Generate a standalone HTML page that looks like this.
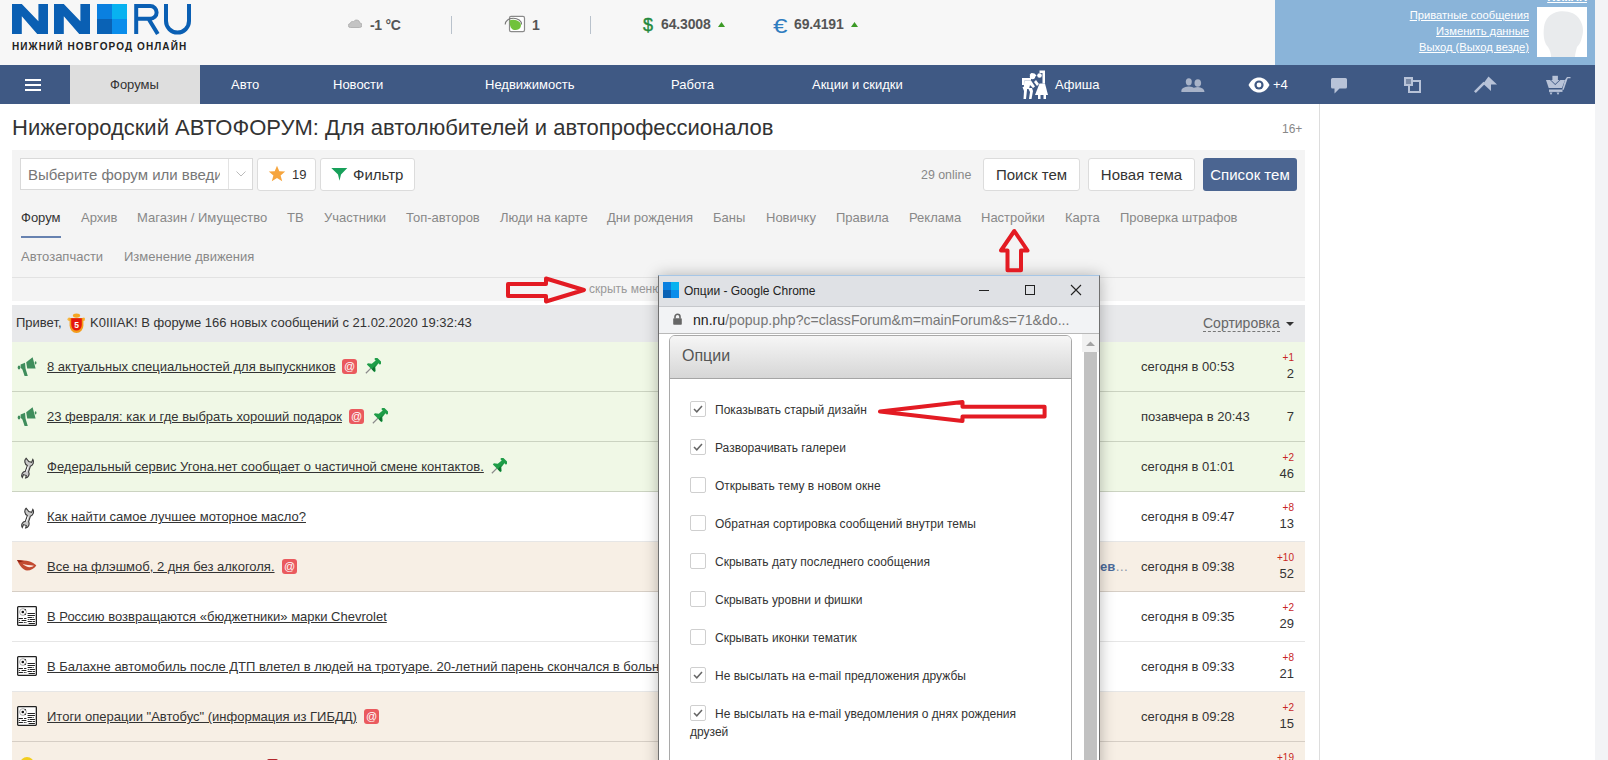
<!DOCTYPE html>
<html><head><meta charset="utf-8">
<style>
*{box-sizing:border-box;margin:0;padding:0}
html,body{width:1608px;height:760px;overflow:hidden}
body{font-family:"Liberation Sans",sans-serif;background:#f3f4f6;position:relative;color:#333}
.a{position:absolute}
.nw{white-space:nowrap}
#hdr{left:0;top:0;width:1275px;height:65px;background:#f7f7f7}
#upanel{left:1275px;top:0;width:320px;height:65px;background:#8ab4d9}
#nav{left:0;top:65px;width:1595px;height:39px;background:#3f5984}
#content{left:0;top:104px;width:1319px;height:656px;background:#fff}
#rcol{left:1319px;top:104px;width:276px;height:656px;background:#fff;border-left:1px solid #ddd}
.navt{color:#fff;font-size:13px;top:77px;line-height:15px}
.tabs{font-size:13px;color:#888;line-height:15px}
.topic{font-size:13px;color:#333;line-height:15px;text-decoration:underline}
.dt{font-size:13px;color:#333;line-height:15px}
.pl{font-size:10px;color:#c8261f;line-height:12px}
.cnt{font-size:13px;color:#333;line-height:15px}
.at{width:15px;height:15px;background:#ea5a5e;border-radius:3px;color:#fff;font-size:11px;line-height:15px;text-align:center}
.cb{width:16px;height:16px;border:1px solid #cfcfcf;border-radius:2px;background:#fff}
.opt{font-size:12px;color:#333;line-height:14px}
.ulink{color:#fff;font-size:11.2px;text-decoration:underline;right:79px;line-height:13px}
</style></head><body>
<div id="hdr" class="a"></div>
<div id="upanel" class="a"></div>
<div id="nav" class="a"></div>
<div id="content" class="a"></div>
<div id="rcol" class="a"></div>

<!-- logo -->
<svg class="a" style="left:0;top:0" width="200" height="55" viewBox="0 0 200 55">
 <path fill="#0a5fb3" d="M12,4 h9.8 l16.6,17.3 v-17.3 h9.6 v30 h-10.8 l-15.4,-17.8 v17.8 h-9.8z"/>
 <path fill="#0a5fb3" d="M54,4 h9.8 l16.6,17.3 v-17.3 h9.6 v30 h-10.8 l-15.4,-17.8 v17.8 h-9.8z"/>
 <rect x="97" y="4" width="15" height="15" fill="#0a80e0"/>
 <rect x="112" y="4" width="15" height="15" fill="#08b2f0"/>
 <rect x="97" y="19" width="15" height="15" fill="#0a62b5"/>
 <rect x="112" y="19" width="15" height="15" fill="#0a8deb"/>
 <path fill="none" stroke="#0a5fb3" stroke-width="4" d="M136.2,34 V6 h14 a6.4,6.4 0 0 1 0,12.8 h-14 M148.5,18.8 L157.8,34"/>
 <path fill="none" stroke="#0a5fb3" stroke-width="4" d="M166,4 V21.1 a11.5,11.5 0 0 0 23,0 V4"/>
</svg>
<div class="a nw" style="left:12px;top:41px;font-size:10px;font-weight:700;letter-spacing:1.1px;color:#222;line-height:11px">НИЖНИЙ НОВГОРОД ОНЛАЙН</div>

<!-- header info -->
<svg class="a" style="left:348px;top:19px" width="14" height="9" viewBox="0 0 14 9"><path fill="#c4c4c4" stroke="#aaa" stroke-width="0.8" d="M2.5,8.5 h9 a2.3,2.3 0 0 0 0.3,-4.6 a3.3,3.3 0 0 0 -6.2,-1.2 a2.4,2.4 0 0 0 -3.4,1.8 a2,2 0 0 0 0.3,4z"/></svg>
<div class="a nw" style="left:370px;top:17px;font-size:14px;letter-spacing:-0.3px;font-weight:700;color:#555;line-height:16px">-1 °C</div>
<div class="a" style="left:451px;top:16px;width:1px;height:18px;background:#b9c2cc"></div>
<svg class="a" style="left:504px;top:15px" width="22" height="18" viewBox="0 0 22 18"><rect x="5.5" y="1.4" width="15" height="15.2" rx="1.6" fill="#fff" stroke="#8a8a8a" stroke-width="1.2"/><path fill="none" stroke="#7a7a7a" stroke-width="1.1" d="M1.2,9.4 A8.2,6.2 0 0 1 17.6,9.4"/><path fill="#71c23b" d="M5.8,5.2 C9,4.2 14,4.6 16.2,7.8 C18,10.8 16.5,15 11.5,15 C7,15 5.4,11.5 5.8,5.2z"/></svg>
<div class="a nw" style="left:532px;top:17px;font-size:14px;font-weight:700;color:#555;line-height:16px">1</div>
<div class="a" style="left:590px;top:16px;width:1px;height:18px;background:#b9c2cc"></div>
<div class="a nw" style="left:643px;top:15px;font-size:18px;color:#23893d;line-height:20px;-webkit-text-stroke:0.4px #23893d">$</div>
<div class="a nw" style="left:661px;top:16px;font-size:14px;letter-spacing:-0.15px;font-weight:700;color:#555;line-height:16px">64.3008</div>
<svg class="a" style="left:718px;top:22px" width="7" height="5" viewBox="0 0 7 5"><path fill="#3c9a26" d="M0,5 L3.5,0 L7,5z"/></svg>
<div class="a nw" style="left:773px;top:15px;font-size:20px;color:#2f7dc0;line-height:22px;transform:scaleX(1.3);transform-origin:0 0">€</div>
<div class="a nw" style="left:794px;top:16px;font-size:14px;letter-spacing:-0.15px;font-weight:700;color:#555;line-height:16px">69.4191</div>
<svg class="a" style="left:851px;top:22px" width="7" height="5" viewBox="0 0 7 5"><path fill="#3c9a26" d="M0,5 L3.5,0 L7,5z"/></svg>

<!-- user panel -->
<div class="a nw ulink" style="top:-9px;right:21px;font-weight:700">K0IIIAK</div>
<div class="a nw ulink" style="top:9px">Приватные сообщения</div>
<div class="a nw ulink" style="top:25px">Изменить данные</div>
<div class="a nw ulink" style="top:41px">Выход (Выход везде)</div>
<div class="a" style="left:1537px;top:7px;width:50px;height:50px;background:#fff;overflow:hidden">
 <svg width="50" height="50" viewBox="0 0 50 50"><path fill="#e9ebed" d="M14,50 C14,46 13,43 11,40 C7,36 6,28 7,20 C8,12 13,6 22,4.5 C31,3.5 39,6 43,13 C46,18 47,24 45,30 C44,35 42,38 40,40 C39,44 38,47 38,50z"/></svg>
</div>

<!-- nav -->
<div class="a" style="left:70px;top:65px;width:130px;height:39px;background:#dedede"></div>
<div class="a" style="left:25px;top:79px;width:16px;height:2px;background:#fff"></div>
<div class="a" style="left:25px;top:84px;width:16px;height:2px;background:#fff"></div>
<div class="a" style="left:25px;top:89px;width:16px;height:2px;background:#fff"></div>
<div class="a nw navt" style="left:110px;color:#333">Форумы</div>
<div class="a nw navt" style="left:231px">Авто</div>
<div class="a nw navt" style="left:333px">Новости</div>
<div class="a nw navt" style="left:485px">Недвижимость</div>
<div class="a nw navt" style="left:671px">Работа</div>
<div class="a nw navt" style="left:812px">Акции и скидки</div>
<div class="a nw navt" style="left:1055px">Афиша</div>
<div class="a nw navt" style="left:1273px">+4</div>
<svg class="a" style="left:1015px;top:66px" width="40" height="38" viewBox="0 0 40 38" fill="#fff">
 <circle cx="17.5" cy="10.5" r="2.7"/><path d="M14.5,8.5 l2,-1.5 l3,0.5 l2,2 l-1,1z"/>
 <path d="M7,12 h9 v2.5 h-6.5 v4.5 h-2.5z"/>
 <path d="M9.5,14.5 h6.5 l4,6 l-2,1.5 l-3,-3 l-1,4 h-5.5z"/>
 <path d="M7.5,21 h5 l-0.5,3 l-1,9 h-2.5 l0.5,-8z"/>
 <path d="M13,22 h4 l1,3 l-1.5,8 h-2.5 l1,-7z"/>
 <path d="M19,16 l2,-2 l3,4 l-2,2z"/>
 <circle cx="24.5" cy="9.5" r="2.3"/>
 <path d="M24.5,4.5 h5.5 v13 h-2.5 v-10.5 h-3z"/>
 <path d="M24.5,17.5 h5.5 l3,11.5 h-13z"/>
 <rect x="23" y="29" width="2.5" height="4"/><rect x="28.5" y="29" width="2.5" height="4"/>
</svg>
<svg class="a" style="left:1181px;top:78px" width="24" height="15" viewBox="0 0 24 15" fill="#a8b3c8">
 <ellipse cx="7.8" cy="3.8" rx="3" ry="3.6"/><ellipse cx="16.8" cy="5" rx="3.3" ry="3.8"/>
 <path d="M0.5,14 a7,4.5 0 0 1 7.5,-5.5 a7,4.5 0 0 1 7,5.5z"/>
 <path d="M9,14 a8,5 0 0 1 7.8,-5 a7,5 0 0 1 6.7,5z"/>
</svg>
<svg class="a" style="left:1248px;top:77px" width="22" height="16" viewBox="0 0 22 16">
 <path fill="#fff" d="M0.5,8 C4,1.5 8,0.5 11,0.5 C14,0.5 18,1.5 21.5,8 C18,14.5 14,15.5 11,15.5 C8,15.5 4,14.5 0.5,8z"/>
 <circle cx="11" cy="8" r="4.6" fill="#3f5984"/><circle cx="11" cy="8" r="2.4" fill="#fff"/>
</svg>
<svg class="a" style="left:1330px;top:77px" width="18" height="18" viewBox="0 0 18 18" fill="#b8c3d8">
 <path d="M2.5,1 h13 a1.5,1.5 0 0 1 1.5,1.5 v7.5 a1.5,1.5 0 0 1 -1.5,1.5 h-6 l-5,5 v-5 h-2 a1.5,1.5 0 0 1 -1.5,-1.5 v-7.5 a1.5,1.5 0 0 1 1.5,-1.5z"/>
</svg>
<svg class="a" style="left:1403px;top:76px" width="19" height="19" viewBox="0 0 19 19">
 <path fill="none" stroke="#b8c3d8" stroke-width="2" d="M10,5 h7 v11 h-11 v-7"/>
 <rect x="2" y="2" width="7" height="7" fill="#7a8aa6" stroke="#b8c3d8" stroke-width="2"/>
</svg>
<svg class="a" style="left:1472px;top:74px" width="28" height="20" viewBox="0 0 28 20" fill="#b8c3d8">
 <path d="M2,17.2 L11.5,7.7 l1.8,1.8 L3.8,19z"/>
 <path d="M16.5,2.5 L25,10.5 h-6 v6.5 L11.2,9.8z"/>
</svg>
<svg class="a" style="left:1544px;top:74px" width="28" height="22" viewBox="0 0 28 22" fill="#b8c3d8">
 <path d="M2,6 h19 l-3,8 h-13.3z"/>
 <path d="M21,6 l2,-3 h3.5 v1.2 h-2.8 l-4,11.5 h-1.5z"/>
 <rect x="5" y="15.5" width="13.5" height="2.4"/>
 <path d="M5.5,18.5 h3 l-1.5,2.5z M12.5,18.5 h3 l-1.5,2.5z"/>
 <rect x="8.4" y="1.8" width="5.5" height="5"/>
 <path fill="#3f5984" d="M6,6 l5.2,5 l5.2,-5 h-2 l-3.2,3 l-3.2,-3z"/>
 <path d="M7,6 h8.4 l-4.2,4z"/>
</svg>

<!-- title -->
<div class="a nw" style="left:12px;top:115px;font-size:22px;color:#333;line-height:25px">Нижегородский АВТОФОРУМ: Для автолюбителей и автопрофессионалов</div>
<div class="a nw" style="left:1282px;top:122px;font-size:12px;color:#888;line-height:14px">16+</div>

<!-- toolbar panel -->
<div class="a" style="left:12px;top:150px;width:1293px;height:128px;background:#f4f4f4;border-bottom:1px solid #e2e2e2"></div>
<div class="a" style="left:20px;top:158px;width:233px;height:32px;background:#fff;border:1px solid #d9d9d9"></div>
<div class="a" style="left:228px;top:159px;width:1px;height:30px;background:#e3e3e3"></div>
<div class="a nw" style="left:20px;top:159px;width:200px;overflow:hidden;padding-left:8px;font-size:15px;color:#777;line-height:32px">Выберите форум или введите</div>
<svg class="a" style="left:236px;top:171px" width="10" height="6" viewBox="0 0 10 6"><path fill="none" stroke="#bbb" stroke-width="1" d="M0.5,0.5 L5,5 L9.5,0.5"/></svg>
<div class="a" style="left:257px;top:158px;width:59px;height:33px;background:#fff;border:1px solid #dcdcdc;border-radius:3px"></div>
<svg class="a" style="left:268px;top:165px" width="18" height="18" viewBox="0 0 18 18"><path fill="#f6a53e" d="M9,0.8 L11.3,6.3 L17.2,6.6 L12.6,10.4 L14.2,16.3 L9,13 L3.8,16.3 L5.4,10.4 L0.8,6.6 L6.7,6.3z"/></svg>
<div class="a nw" style="left:292px;top:167px;font-size:13px;color:#333;line-height:15px">19</div>
<div class="a" style="left:320px;top:158px;width:95px;height:33px;background:#fff;border:1px solid #dcdcdc;border-radius:3px"></div>
<svg class="a" style="left:331px;top:167px" width="17" height="15" viewBox="0 0 17 15"><path fill="#17a05a" d="M0.3,1 h16 L10,7.5 L8.5,13.8 L7,7.5z"/></svg>
<div class="a nw" style="left:353px;top:166px;font-size:15px;color:#333;line-height:17px">Фильтр</div>
<div class="a nw" style="left:921px;top:168px;font-size:12.4px;color:#888;line-height:15px">29 online</div>
<div class="a" style="left:983px;top:158px;width:97px;height:33px;background:#fff;border:1px solid #dcdcdc;border-radius:3px"></div>
<div class="a nw" style="left:983px;top:158px;width:97px;text-align:center;font-size:15px;color:#333;line-height:33px">Поиск тем</div>
<div class="a" style="left:1088px;top:158px;width:107px;height:33px;background:#fff;border:1px solid #dcdcdc;border-radius:3px"></div>
<div class="a nw" style="left:1088px;top:158px;width:107px;text-align:center;font-size:15px;color:#333;line-height:33px">Новая тема</div>
<div class="a" style="left:1203px;top:158px;width:94px;height:33px;background:#4b6591;border-radius:3px"></div>
<div class="a nw" style="left:1203px;top:158px;width:94px;text-align:center;font-size:15px;color:#fff;line-height:33px">Список тем</div>

<!-- tabs -->
<div class="a nw" style="left:21px;top:210px;font-size:13px;color:#333;line-height:15px">Форум</div>
<div class="a" style="left:21px;top:236px;width:40px;height:2px;background:#6782b0"></div>
<div class="a nw tabs" style="left:81px;top:210px">Архив</div>
<div class="a nw tabs" style="left:137px;top:210px">Магазин / Имущество</div>
<div class="a nw tabs" style="left:287px;top:210px">ТВ</div>
<div class="a nw tabs" style="left:324px;top:210px">Участники</div>
<div class="a nw tabs" style="left:406px;top:210px">Топ-авторов</div>
<div class="a nw tabs" style="left:500px;top:210px">Люди на карте</div>
<div class="a nw tabs" style="left:607px;top:210px">Дни рождения</div>
<div class="a nw tabs" style="left:713px;top:210px">Баны</div>
<div class="a nw tabs" style="left:766px;top:210px">Новичку</div>
<div class="a nw tabs" style="left:836px;top:210px">Правила</div>
<div class="a nw tabs" style="left:909px;top:210px">Реклама</div>
<div class="a nw tabs" style="left:981px;top:210px">Настройки</div>
<div class="a nw tabs" style="left:1065px;top:210px">Карта</div>
<div class="a nw tabs" style="left:1120px;top:210px">Проверка штрафов</div>
<div class="a nw tabs" style="left:21px;top:249px">Автозапчасти</div>
<div class="a nw tabs" style="left:124px;top:249px">Изменение движения</div>

<!-- hide menu row -->
<div class="a" style="left:12px;top:278px;width:1293px;height:23px;background:#f4f4f4"></div>
<div class="a nw" style="left:589px;top:282px;font-size:12px;color:#999;line-height:14px">скрыть меню</div>

<!-- greeting -->
<div class="a" style="left:12px;top:305px;width:1293px;height:37px;background:#e8e9eb"></div>
<div class="a nw" style="left:16px;top:315px;font-size:13px;color:#333;line-height:15px">Привет,</div>
<svg class="a" style="left:67px;top:313px" width="18" height="21" viewBox="0 0 18 21"><ellipse cx="9.5" cy="2.6" rx="3.6" ry="2.1" fill="#f5a623"/><circle cx="2.2" cy="6.2" r="1.7" fill="#f7b844"/><circle cx="16.6" cy="6.2" r="1.7" fill="#f7b844"/><path fill="#f39c1a" d="M2.6,5 h13.8 v7.5 a6.9,7.5 0 0 1 -13.8,0z"/><path fill="#e5180d" d="M4.2,5.2 h10.6 v6.6 a5.3,5.8 0 0 1 -10.6,0z"/><text x="9.5" y="14.6" font-size="8.5" font-weight="700" fill="#fff" text-anchor="middle" font-family="Liberation Sans">5</text></svg>
<div class="a nw" style="left:90px;top:315px;font-size:13px;color:#333;line-height:15px">K0IIIAK! В форуме 166 новых сообщений с 21.02.2020 19:32:43</div>
<div class="a nw" style="left:1203px;top:316px;font-size:14px;color:#666;line-height:15px;border-bottom:1px dashed #777;padding-bottom:0px">Сортировка</div>
<svg class="a" style="left:1286px;top:322px" width="8" height="4" viewBox="0 0 8 4"><path fill="#333" d="M0,0 h8 L4,4z"/></svg>

<!-- rows -->
<div class="a" style="left:12px;top:342px;width:1293px;height:50px;background:#f0f8e6;border-bottom:1px solid #cbd3c1"></div>
<svg class="a" style="left:12px;top:352px" width="30" height="28" viewBox="0 0 30 28" fill="#3f8d5c"><ellipse cx="7" cy="15.5" rx="1.3" ry="1.9"/><path d="M8.6,12.6 L13,10.8 L13.6,16.8 L15.8,24 L12.6,24 L10.4,17.6 L8.6,15.8z"/><path d="M14.2,10.2 L20.6,5.2 L23.6,16.6 L15.2,16.4z"/><ellipse cx="23.6" cy="10.8" rx="0.9" ry="1.6"/></svg>
<div class="a nw topic" style="left:47px;top:359px">8 актуальных специальностей для выпускников</div>
<div class="a at" style="left:342px;top:359px">@</div>
<svg class="a" style="left:364px;top:358px" width="17" height="17" viewBox="0 0 17 17"><g transform="translate(8.5,8.5) rotate(45) translate(0,-9.5)"><rect x="-0.5" y="11" width="1.2" height="8" fill="#8a8a8a"/><path fill="#1f9d48" d="M-4,0 h8 v3 h-2 l0.5,5 l3,2.5 v1.5 h-11 v-1.5 l3,-2.5 l0.5,-5 h-2z"/><path fill="#0d6d2d" d="M1,3 l0.5,5 l3,2.5 v1.5 h-3z"/></g></svg>
<div class="a nw dt" style="left:1141px;top:359px">сегодня в 00:53</div>
<div class="a nw pl" style="right:314px;top:352px">+1</div>
<div class="a nw cnt" style="right:314px;top:366px">2</div>
<div class="a" style="left:12px;top:392px;width:1293px;height:50px;background:#f0f8e6;border-bottom:1px solid #cbd3c1"></div>
<svg class="a" style="left:12px;top:402px" width="30" height="28" viewBox="0 0 30 28" fill="#3f8d5c"><ellipse cx="7" cy="15.5" rx="1.3" ry="1.9"/><path d="M8.6,12.6 L13,10.8 L13.6,16.8 L15.8,24 L12.6,24 L10.4,17.6 L8.6,15.8z"/><path d="M14.2,10.2 L20.6,5.2 L23.6,16.6 L15.2,16.4z"/><ellipse cx="23.6" cy="10.8" rx="0.9" ry="1.6"/></svg>
<div class="a nw topic" style="left:47px;top:409px">23 февраля: как и где выбрать хороший подарок</div>
<div class="a at" style="left:349px;top:409px">@</div>
<svg class="a" style="left:371px;top:408px" width="17" height="17" viewBox="0 0 17 17"><g transform="translate(8.5,8.5) rotate(45) translate(0,-9.5)"><rect x="-0.5" y="11" width="1.2" height="8" fill="#8a8a8a"/><path fill="#1f9d48" d="M-4,0 h8 v3 h-2 l0.5,5 l3,2.5 v1.5 h-11 v-1.5 l3,-2.5 l0.5,-5 h-2z"/><path fill="#0d6d2d" d="M1,3 l0.5,5 l3,2.5 v1.5 h-3z"/></g></svg>
<div class="a nw dt" style="left:1141px;top:409px">позавчера в 20:43</div>
<div class="a nw cnt" style="right:314px;top:409px">7</div>
<div class="a" style="left:12px;top:442px;width:1293px;height:50px;background:#f0f8e6;border-bottom:1px solid #cbd3c1"></div>
<svg class="a" style="left:20px;top:457px" width="15" height="22" viewBox="0 0 15 22"><path fill="#c8c8c8" stroke="#3a3a3a" stroke-width="1.1" d="M6.2,1.2 A4.6,4.6 0 0 0 7.3,8.6 L5.4,14.2 A4.3,4.3 0 0 0 2.3,20.6 L3.5,17.6 L6.3,18.6 L5.6,21 A4.3,4.3 0 0 0 8.6,14.8 L10.4,9.2 A4.6,4.6 0 0 0 12.8,2.4 L11.6,5.4 L8.8,4.6z"/><path stroke="#fff" stroke-width="1" d="M8.2,9.5 L6.5,14.5"/></svg>
<div class="a nw topic" style="left:47px;top:459px">Федеральный сервис Угона.нет сообщает о частичной смене контактов.</div>
<svg class="a" style="left:490px;top:458px" width="17" height="17" viewBox="0 0 17 17"><g transform="translate(8.5,8.5) rotate(45) translate(0,-9.5)"><rect x="-0.5" y="11" width="1.2" height="8" fill="#8a8a8a"/><path fill="#1f9d48" d="M-4,0 h8 v3 h-2 l0.5,5 l3,2.5 v1.5 h-11 v-1.5 l3,-2.5 l0.5,-5 h-2z"/><path fill="#0d6d2d" d="M1,3 l0.5,5 l3,2.5 v1.5 h-3z"/></g></svg>
<div class="a nw dt" style="left:1141px;top:459px">сегодня в 01:01</div>
<div class="a nw pl" style="right:314px;top:452px">+2</div>
<div class="a nw cnt" style="right:314px;top:466px">46</div>
<div class="a" style="left:12px;top:492px;width:1293px;height:50px;background:#ffffff;border-bottom:1px solid #e6e6e6"></div>
<svg class="a" style="left:20px;top:507px" width="15" height="22" viewBox="0 0 15 22"><path fill="#c8c8c8" stroke="#3a3a3a" stroke-width="1.1" d="M6.2,1.2 A4.6,4.6 0 0 0 7.3,8.6 L5.4,14.2 A4.3,4.3 0 0 0 2.3,20.6 L3.5,17.6 L6.3,18.6 L5.6,21 A4.3,4.3 0 0 0 8.6,14.8 L10.4,9.2 A4.6,4.6 0 0 0 12.8,2.4 L11.6,5.4 L8.8,4.6z"/><path stroke="#fff" stroke-width="1" d="M8.2,9.5 L6.5,14.5"/></svg>
<div class="a nw topic" style="left:47px;top:509px">Как найти самое лучшее моторное масло?</div>
<div class="a nw dt" style="left:1141px;top:509px">сегодня в 09:47</div>
<div class="a nw pl" style="right:314px;top:502px">+8</div>
<div class="a nw cnt" style="right:314px;top:516px">13</div>
<div class="a" style="left:12px;top:542px;width:1293px;height:50px;background:#f7efe5;border-bottom:1px solid #d6cec5"></div>
<svg class="a" style="left:16px;top:559px" width="21" height="13" viewBox="0 0 21 13"><path fill="#c24a30" d="M1,1 C6,1.3 10,1.6 13,2.2 C16,3 18.5,4.5 20.3,6.6 C18.5,9.5 15,11.6 11,11.6 C7,11.2 3.5,6.5 1,1z"/><path fill="#8e1f10" d="M1,1 C4,1.2 6,1.5 8,2 L3,3.5z"/><path fill="#fbe9e2" d="M6.5,4.8 C9.5,5.8 14,6.2 18,6.8 C15.5,8.8 10.5,9 6.5,4.8z"/></svg>
<div class="a nw topic" style="left:47px;top:559px">Все на флэшмоб, 2 дня без алкоголя.</div>
<div class="a at" style="left:282px;top:559px">@</div>
<div class="a nw dt" style="left:1141px;top:559px">сегодня в 09:38</div>
<div class="a nw pl" style="right:314px;top:552px">+10</div>
<div class="a nw cnt" style="right:314px;top:566px">52</div>
<div class="a" style="left:12px;top:592px;width:1293px;height:50px;background:#ffffff;border-bottom:1px solid #e6e6e6"></div>
<svg class="a" style="left:17px;top:606px" width="20" height="20" viewBox="0 0 20 20"><rect x="0.65" y="0.65" width="18.7" height="18.7" rx="0.8" fill="#fff" stroke="#222" stroke-width="1.3"/><circle cx="6" cy="6" r="3.4" fill="none" stroke="#999" stroke-width="0.8"/><circle cx="5.8" cy="6" r="1.3" fill="#111"/><circle cx="8.2" cy="3.8" r="0.8" fill="#222"/><circle cx="8.2" cy="8.2" r="0.8" fill="#222"/><path fill="none" stroke="#222" stroke-width="1.1" stroke-linecap="round" d="M11,7.5 h6.5 M11,9.5 h6.5 M11,11.5 h3.5 M16,11.5 h0.2 M11.2,13.5 h0.2 M13,13.5 h4.5 M11,15.5 h3.5 M16,15.5 h1.5 M12,17.5 h5.5 M2,12.5 h3.5 M7.5,12.5 h1.5 M2.2,14.5 h0.2 M5,14.5 h4 M2,16.5 h3.5 M7.2,16.5 h0.2 M8.8,16.5 h0.2"/></svg>
<div class="a nw topic" style="left:47px;top:609px">В Россию возвращаются «бюджетники» марки Chevrolet</div>
<div class="a nw dt" style="left:1141px;top:609px">сегодня в 09:35</div>
<div class="a nw pl" style="right:314px;top:602px">+2</div>
<div class="a nw cnt" style="right:314px;top:616px">29</div>
<div class="a" style="left:12px;top:642px;width:1293px;height:50px;background:#ffffff;border-bottom:1px solid #e6e6e6"></div>
<svg class="a" style="left:17px;top:656px" width="20" height="20" viewBox="0 0 20 20"><rect x="0.65" y="0.65" width="18.7" height="18.7" rx="0.8" fill="#fff" stroke="#222" stroke-width="1.3"/><circle cx="6" cy="6" r="3.4" fill="none" stroke="#999" stroke-width="0.8"/><circle cx="5.8" cy="6" r="1.3" fill="#111"/><circle cx="8.2" cy="3.8" r="0.8" fill="#222"/><circle cx="8.2" cy="8.2" r="0.8" fill="#222"/><path fill="none" stroke="#222" stroke-width="1.1" stroke-linecap="round" d="M11,7.5 h6.5 M11,9.5 h6.5 M11,11.5 h3.5 M16,11.5 h0.2 M11.2,13.5 h0.2 M13,13.5 h4.5 M11,15.5 h3.5 M16,15.5 h1.5 M12,17.5 h5.5 M2,12.5 h3.5 M7.5,12.5 h1.5 M2.2,14.5 h0.2 M5,14.5 h4 M2,16.5 h3.5 M7.2,16.5 h0.2 M8.8,16.5 h0.2"/></svg>
<div class="a nw topic" style="left:47px;top:659px">В Балахне автомобиль после ДТП влетел в людей на тротуаре. 20-летний парень скончался в больнице</div>
<div class="a nw dt" style="left:1141px;top:659px">сегодня в 09:33</div>
<div class="a nw pl" style="right:314px;top:652px">+8</div>
<div class="a nw cnt" style="right:314px;top:666px">21</div>
<div class="a" style="left:12px;top:692px;width:1293px;height:50px;background:#f7efe5;border-bottom:1px solid #d6cec5"></div>
<svg class="a" style="left:17px;top:706px" width="20" height="20" viewBox="0 0 20 20"><rect x="0.65" y="0.65" width="18.7" height="18.7" rx="0.8" fill="#fff" stroke="#222" stroke-width="1.3"/><circle cx="6" cy="6" r="3.4" fill="none" stroke="#999" stroke-width="0.8"/><circle cx="5.8" cy="6" r="1.3" fill="#111"/><circle cx="8.2" cy="3.8" r="0.8" fill="#222"/><circle cx="8.2" cy="8.2" r="0.8" fill="#222"/><path fill="none" stroke="#222" stroke-width="1.1" stroke-linecap="round" d="M11,7.5 h6.5 M11,9.5 h6.5 M11,11.5 h3.5 M16,11.5 h0.2 M11.2,13.5 h0.2 M13,13.5 h4.5 M11,15.5 h3.5 M16,15.5 h1.5 M12,17.5 h5.5 M2,12.5 h3.5 M7.5,12.5 h1.5 M2.2,14.5 h0.2 M5,14.5 h4 M2,16.5 h3.5 M7.2,16.5 h0.2 M8.8,16.5 h0.2"/></svg>
<div class="a nw topic" style="left:47px;top:709px">Итоги операции &quot;Автобус&quot; (информация из ГИБДД)</div>
<div class="a at" style="left:364px;top:709px">@</div>
<div class="a nw dt" style="left:1141px;top:709px">сегодня в 09:28</div>
<div class="a nw pl" style="right:314px;top:702px">+2</div>
<div class="a nw cnt" style="right:314px;top:716px">15</div>
<div class="a" style="left:12px;top:742px;width:1293px;height:50px;background:#f7efe5;border-bottom:1px solid #d6cec5"></div>
<svg class="a" style="left:19px;top:756px" width="16" height="16" viewBox="0 0 16 16"><circle cx="8" cy="8" r="7" fill="#f2cd1f"/></svg>
<div class="a nw pl" style="right:314px;top:752px">+19</div>
<!-- /rows -->
<!-- extra row bits -->
<div class="a nw" style="left:1100px;top:559px;font-size:13px;font-weight:700;color:#4b6a9a;line-height:15px">ев<span style="font-weight:400;color:#8a96a8">…</span></div>
<div class="a" style="left:267px;top:759px;width:11px;height:10px;background:#b3252c;border-radius:2px"></div>

<!-- popup window -->
<div class="a" style="left:658px;top:275px;width:442px;height:500px;background:#fff;border:1px solid #707070;border-top-color:#a6c6e6;box-shadow:0 0 14px rgba(0,0,0,0.28)"></div>
<div class="a" style="left:659px;top:276px;width:440px;height:31px;background:#dfe1e5;border-bottom:1px solid #c6c8cc"></div>
<svg class="a" style="left:663px;top:282px" width="16" height="16" viewBox="0 0 16 16"><rect x="0" y="0" width="8" height="8" fill="#0a80e0"/><rect x="8" y="0" width="8" height="8" fill="#08b2f0"/><rect x="0" y="8" width="8" height="8" fill="#0a62b5"/><rect x="8" y="8" width="8" height="8" fill="#0a8deb"/></svg>
<div class="a nw" style="left:684px;top:284px;font-size:12px;color:#222;line-height:14px">Опции - Google Chrome</div>
<div class="a" style="left:979px;top:290px;width:10px;height:1px;background:#222"></div>
<div class="a" style="left:1025px;top:285px;width:10px;height:10px;border:1px solid #222"></div>
<svg class="a" style="left:1070px;top:284px" width="12" height="12" viewBox="0 0 12 12"><path stroke="#222" stroke-width="1.1" d="M1,1 L11,11 M11,1 L1,11"/></svg>
<div class="a" style="left:659px;top:307px;width:440px;height:27px;background:#f2f3f5;border-bottom:1px solid #b9b9b9"></div>
<svg class="a" style="left:673px;top:313px" width="9" height="12" viewBox="0 0 9 12"><path fill="none" stroke="#666" stroke-width="1.6" d="M2,5.5 V3.8 a2.5,2.5 0 0 1 5,0 V5.5"/><rect x="0.2" y="5.2" width="8.6" height="6.6" rx="0.8" fill="#666"/></svg>
<div class="a nw" style="left:693px;top:312px;font-size:14.1px;color:#777;line-height:16px"><span style="color:#222">nn.ru</span>/popup.php?c=classForum&amp;m=mainForum&amp;s=71&amp;do...</div>
<!-- scrollbar -->
<div class="a" style="left:1082px;top:334px;width:17px;height:426px;background:#fff"></div>
<div class="a" style="left:1082px;top:334px;width:17px;height:18px;background:#f1f1f1"></div>
<svg class="a" style="left:1086px;top:341px" width="9" height="6" viewBox="0 0 9 6"><path fill="#a3a3a3" d="M0,5 L4.5,0.5 L9,5z"/></svg>
<div class="a" style="left:1084px;top:352px;width:13px;height:410px;background:#c1c1c1"></div>
<!-- inner panel -->
<div class="a" style="left:669px;top:335px;width:403px;height:440px;background:#fff;border:1px solid #a9a9a9;border-radius:6px 6px 0 0;overflow:hidden">
 <div style="height:43px;background:linear-gradient(#f6f6f6,#d6d6d6);border-bottom:1px solid #a5a5a5"></div>
</div>
<div class="a nw" style="left:682px;top:347px;font-size:16px;color:#555;line-height:18px">Опции</div>

<!-- opts -->
<div class="a cb" style="left:690px;top:401px"></div>
<svg class="a" style="left:693px;top:405px" width="10" height="8" viewBox="0 0 10 8"><path fill="none" stroke="#666" stroke-width="1.5" d="M1,4 L3.8,6.8 L9,1"/></svg>
<div class="a nw opt" style="left:715px;top:403px">Показывать старый дизайн</div>
<div class="a cb" style="left:690px;top:439px"></div>
<svg class="a" style="left:693px;top:443px" width="10" height="8" viewBox="0 0 10 8"><path fill="none" stroke="#666" stroke-width="1.5" d="M1,4 L3.8,6.8 L9,1"/></svg>
<div class="a nw opt" style="left:715px;top:441px">Разворачивать галереи</div>
<div class="a cb" style="left:690px;top:477px"></div>
<div class="a nw opt" style="left:715px;top:479px">Открывать тему в новом окне</div>
<div class="a cb" style="left:690px;top:515px"></div>
<div class="a nw opt" style="left:715px;top:517px">Обратная сортировка сообщений внутри темы</div>
<div class="a cb" style="left:690px;top:553px"></div>
<div class="a nw opt" style="left:715px;top:555px">Скрывать дату последнего сообщения</div>
<div class="a cb" style="left:690px;top:591px"></div>
<div class="a nw opt" style="left:715px;top:593px">Скрывать уровни и фишки</div>
<div class="a cb" style="left:690px;top:629px"></div>
<div class="a nw opt" style="left:715px;top:631px">Скрывать иконки тематик</div>
<div class="a cb" style="left:690px;top:667px"></div>
<svg class="a" style="left:693px;top:671px" width="10" height="8" viewBox="0 0 10 8"><path fill="none" stroke="#666" stroke-width="1.5" d="M1,4 L3.8,6.8 L9,1"/></svg>
<div class="a nw opt" style="left:715px;top:669px">Не высылать на e-mail предложения дружбы</div>
<div class="a cb" style="left:690px;top:705px"></div>
<svg class="a" style="left:693px;top:709px" width="10" height="8" viewBox="0 0 10 8"><path fill="none" stroke="#666" stroke-width="1.5" d="M1,4 L3.8,6.8 L9,1"/></svg>
<div class="a nw opt" style="left:715px;top:707px">Не высылать на e-mail уведомления о днях рождения</div>
<div class="a nw opt" style="left:690px;top:725px">друзей</div>
<!-- /opts -->
<!-- arrows -->
<svg class="a" style="left:0;top:0;pointer-events:none" width="1608" height="760" viewBox="0 0 1608 760">
 <g fill="none" stroke="#e31b23" stroke-width="4" stroke-linejoin="round">
  <path d="M508,284 H546 V278.5 L584,290 L546,301.5 V296 H508z"/>
  <path d="M1014.3,231 L1027.5,250.5 H1021 V270.3 H1007.5 V250.5 H1001z"/>
  <path d="M880,411.5 L962.5,402 V406.7 H1044.6 V416.4 H962.5 V421z"/>
 </g>
</svg>
<!-- /arrows -->
</body></html>
